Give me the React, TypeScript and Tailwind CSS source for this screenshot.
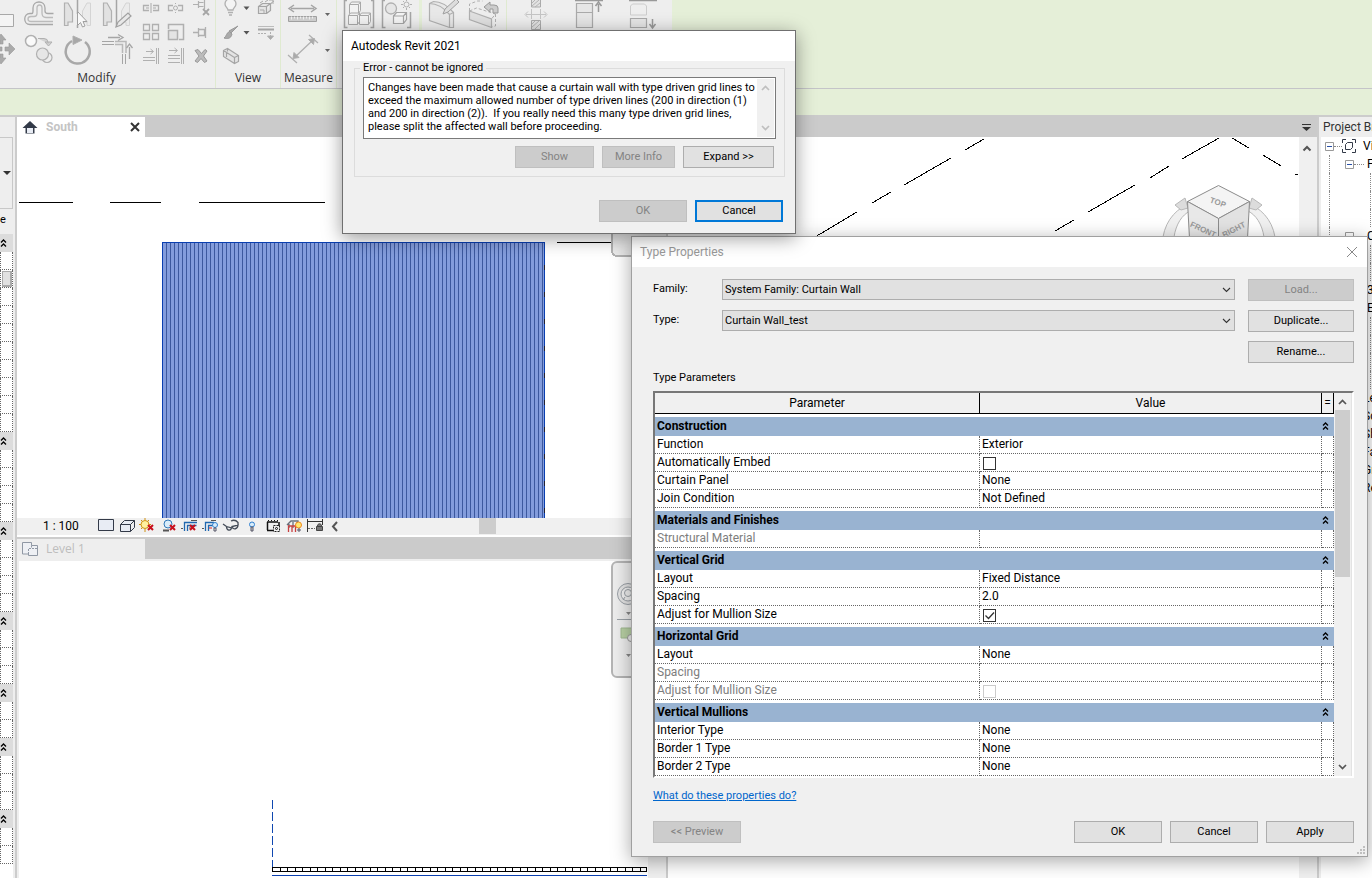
import React from 'react';

const UI = "font-['Roboto','Noto_Sans',sans-serif]";
const SEGOE = "font-['Open_Sans','Noto_Sans',sans-serif]";

interface GlyphProps {
  x: number;
  y: number;
  w: number;
  h: number;
  children: React.ReactNode;
}

// Icons of one bar share that bar's coordinate system
const Glyph: React.FC<GlyphProps> = ({ x, y, w, h, children }) => (
  <svg width={w} height={h} viewBox={`${x} ${y} ${w} ${h}`} fill="none" stroke="#b0b0b0" className="block shrink-0">
    {children}
  </svg>
);

const Tool: React.FC<GlyphProps & { label: string }> = ({ label, ...glyph }) => (
  <button type="button" aria-label={label} className="block">
    <Glyph {...glyph} />
  </button>
);

const RibbonPanel: React.FC<{ title?: string; className?: string; children: React.ReactNode }> = ({ title, className = '', children }) => (
  <div className={`flex h-[88px] shrink-0 flex-col bg-[#eeeeee] ${className}`}>
    <div className="flex">{children}</div>
    {title && <div className="flex-1 text-center text-[12px] leading-6 text-[#333]">{title}</div>}
  </div>
);

const Ribbon = () => (
  <header className={`flex h-[89px] shrink-0 border-b border-[#c4c4c8] ${SEGOE}`}>
    <RibbonPanel className="w-[216px] border-r border-[#dfead0]">
      <div className="flex flex-col">
        <div className="flex">
          <div>
            <Tool label="Cope" x={0} y={0} w={18} h={32}>
              <path d="M-4 14.500h17.500v12h-17.500" fill="#f4f4f4" stroke="#a8a8a8" />
            </Tool>
            <Tool label="Move" x={0} y={32} w={18} h={34}>
              <path d="M1 34l5 6H3v4H0v-4h-4zM1 64l5-6H3v-4H0v4h-4zM15 49l-6-6v4H5v4h4v4zM0 47h2v4H0" fill="#aaa" stroke="#999" strokeWidth=".6" />
            </Tool>
          </div>
          <div>
            <Tool label="Offset" x={18} y={0} w={40} h={32}>
              <path d="M53 24.500H30c-7 0-7-11 0-11h2c1 0 1-1 1-3V8c0-8 12-8 12 0v3c0 2 1 2.500 3 2.500h5.500" stroke="#a8a8a8" strokeWidth="1.300" />
              <path d="M53 21.500H31c-4 0-4-5 0-5h3c2 0 3-1 3-3V8c0-4 5-4 5 0v5c0 3 1 4.500 4 4.500h7" stroke="#bbb" strokeWidth="1.300" />
            </Tool>
            <Tool label="Copy" x={18} y={32} w={40} h={34}>
              <circle cx="31" cy="41" r="5.500" fill="#fafafa" strokeWidth="1.500" />
              <path d="M38 38.500h6q4 0 4 4v1M45 42h7l-3.500 4z" fill="#aaa" fillOpacity=".4" />
              <circle cx="47" cy="57.500" r="5" fill="#eee" strokeWidth="1.200" />
              <circle cx="42.500" cy="54" r="6" fill="#e6e6e6" strokeWidth="1.200" />
            </Tool>
          </div>
          <div>
            <Tool label="Mirror - Pick Axis" x={58} y={0} w={40} h={32}>
              <path d="M64.500 3v22.500h3.500V22h4.500V11L68 3z" fill="#e2e2e2" strokeWidth="1.200" />
              <path d="M90.500 3v22.500h-3.500V22h-4.500V11L87 3z" fill="#ebebeb" stroke="#d4d4d4" />
              <path d="M77.500 0v14M77.500 25v3" stroke="#a5a5a5" strokeWidth="1.500" />
              <path d="M77.500 11.500v14l3-3 2 4.500 2.500-1-2-4.500h4z" fill="#f8f8f8" stroke="#a0a0a0" />
            </Tool>
            <Tool label="Rotate" x={58} y={32} w={40} h={34}>
              <path d="M72 41a12 12 0 1 0 13 1" stroke="#a8a8a8" strokeWidth="2.500" />
              <path d="M73 36l9 4-9 4.500z" fill="#a8a8a8" />
            </Tool>
          </div>
          <div>
            <Tool label="Mirror - Draw Axis" x={98} y={0} w={40} h={32}>
              <path d="M103.500 3v22.500h3.500V22h4.500V11L107 3z" fill="#e2e2e2" strokeWidth="1.200" />
              <path d="M129.500 3v22.500h-3.500V22h-4.500V11L126 3z" fill="#ebebeb" stroke="#d4d4d4" />
              <path d="M116.500 0v27" stroke="#a5a5a5" strokeWidth="1.500" />
              <path d="M116 27l2-5 10-9 3 3-10 9z" fill="#e8e8e8" stroke="#a0a0a0" strokeWidth="1.200" />
            </Tool>
            <Tool label="Trim/Extend to Corner" x={98} y={32} w={40} h={34}>
              <path d="M102 41.500h12M102 44.500h12M122.500 54v10M125.500 54v10" stroke="#a5a5a5" />
              <path d="M115 41.500h11V53M115 44.500h7.500V53" stroke="#b8b8b8" strokeWidth="1.500" />
              <path d="M108 37.500h12M129.500 59V47" stroke="#a5a5a5" strokeWidth="1.300" />
              <path d="M118 34.500l5 3-5 3M126.500 48l3-4 3 4" stroke="#a5a5a5" strokeWidth="1.300" />
            </Tool>
          </div>
          <div>
            <Tool label="Split Element" x={138} y={0} w={25} h={20}>
              <path d="M149 5.500h-5.500v5h5.500M153 5.500h5.500v5H153" strokeWidth="1.300" />
              <path d="M151 3v10M146 8h3M153 8h3" stroke="#aaa" />
            </Tool>
            <Tool label="Array" x={138} y={20} w={25} h={24}>
              <path d="M143.500 24.500h6v6h-6zM152.500 24.500h6v6h-6zM143.500 33.500h6v6h-6zM152.500 33.500h6v6h-6z" strokeWidth="1.300" />
            </Tool>
            <Tool label="Trim/Extend Single" x={138} y={44} w={25} h={22}>
              <path d="M156.500 48v16M158.500 48v16M143 57.500h12M143 60.500h12M146 51.500h7M150.500 49l3 2.500-3 2.500" />
            </Tool>
          </div>
          <div>
            <Tool label="Split with Gap" x={163} y={0} w={25} h={20}>
              <path d="M173 5.500h-4.500v5h4.500M178 5.500h4.500v5H178" strokeWidth="1.300" />
              <path d="M175.500 3v1M175.500 12v1" />
              <circle cx="175.500" cy="8" r="2" />
            </Tool>
            <Tool label="Scale" x={163} y={20} w={25} h={24}>
              <path d="M168.500 29v-4.500h15v15H179" strokeWidth="1.500" />
              <path d="M168.500 30.500h9v9h-9z" fill="#e4e4e4" strokeWidth="1.500" />
            </Tool>
            <Tool label="Trim/Extend Multiple" x={163} y={44} w={25} h={22}>
              <path d="M181.500 48v16M183.500 48v16M168 55.500h12M168 58.500h12M168 62.500h12M169 50.500h8M174.500 48l3 2.500-3 2.500" />
            </Tool>
          </div>
          <div>
            <Tool label="Unpin" x={188} y={0} w={25} h={20}>
              <path d="M193 4.500h5M198.500 1v7M198.500 2.500h5M198.500 6.500h5M204.500 0v9" strokeWidth="1.200" />
              <path d="M203 9l6 6M209 9l-6 6" stroke="#a5a5a5" strokeWidth="1.800" />
            </Tool>
            <Tool label="Pin" x={188} y={20} w={25} h={24}>
              <path d="M193 32.500h5M198.500 28v9M198.500 29.500h6v6h-6M205.500 27v11" strokeWidth="1.300" />
            </Tool>
            <Tool label="Delete" x={188} y={44} w={25} h={22}>
              <path d="M195 50.500l3-1 3.500 4 3.500-4 2 1.500-3.500 5 3.500 5-2.500 1.500-3.500-4-3.500 4-2.500-1.500 4-5z" fill="#bbb" stroke="#999" />
            </Tool>
          </div>
        </div>
        <div className="pr-5 text-center text-[12px] leading-6 text-[#333]">Modify</div>
      </div>
    </RibbonPanel>

    <RibbonPanel title="View" className="w-[65px] border-r border-[#dfead0]">
      <div className="pl-[2px]">
        <Tool label="Hide in View" x={218} y={0} w={34} h={20}>
          <path d="M228 10c0-2-3-3-3-6a5.500 5.500 0 0 1 11 0c0 3-3 4-3 6zM228 12.500h5M229 15h3" fill="#f4f4f4" strokeWidth="1.300" />
          <path d="M243.500 6.500h6l-3 3.500z" fill="#555" stroke="none" />
        </Tool>
        <Tool label="Override Graphics" x={218} y={20} w={34} h={24}>
          <path d="M238 26l-7 7-2-2zM229.500 31.500l2.500 2.500c-1 5-5 5-8 4 3-2 2-5 5.500-6.500z" fill="#aaa" stroke="#999" />
          <path d="M243.500 31h6l-3 3.500z" fill="#555" stroke="none" />
        </Tool>
        <Tool label="Selection Box" x={218} y={44} w={34} h={22}>
          <path d="M223.500 50.500l4-2 11 7v6l-4 2-11-7zM223.500 50.500l11 7v6M234.500 57.500l4-2M226.500 52v5M227.500 48.500v3" fill="#e4e4e4" strokeWidth="1.200" stroke="#a5a5a5" />
        </Tool>
      </div>
      <div>
        <Tool label="Displace Elements" x={252} y={0} w={28} h={20}>
          <path d="M258.500 6.500h8v7h-8zM258.500 6.500l4-3h8l-4 3M266.500 13.500l4-3v-7" fill="#e4e4e4" strokeWidth="1.200" stroke="#a5a5a5" />
          <path d="M260 3l3-2M265 2l3-2M270 4l4-3M269 0h4v4M260 10h4v3" stroke="#aaa" />
        </Tool>
        <Tool label="Linework" x={252} y={20} w={28} h={24}>
          <path d="M258 26.500h16" stroke="#bbb" />
          <path d="M258 29.500h16" stroke="#a5a5a5" strokeWidth="2" />
          <path d="M258 33.500h9M270.500 32v4" strokeDasharray="2 1" />
          <path d="M267.500 36h6l-3 3.500z" fill="#aaa" />
        </Tool>
      </div>
    </RibbonPanel>

    <RibbonPanel title="Measure" className="w-[56px] border-r border-[#dfead0]">
      <div>
        <Tool label="Measure" x={281} y={0} w={54} h={32}>
          <path d="M291 8.500h23M294 5l-5 3.500 5 3.500M311 5l5 3.500-5 3.500" stroke="#a5a5a5" strokeWidth="1.500" />
          <path d="M288.500 16.500h28v5h-28z" fill="#ccc" stroke="#a0a0a0" />
          <path d="M291.500 16.500v3M294.500 16.500v2M297.500 16.500v3M300.500 16.500v2M303.500 16.500v3M306.500 16.500v2M309.500 16.500v3M312.500 16.500v2" stroke="#eee" />
          <path d="M325 13h5l-2.500 3z" fill="#666" stroke="none" />
        </Tool>
        <Tool label="Aligned Dimension" x={281} y={32} w={54} h={34}>
          <path d="M295 57l18-17M288 55l9 8M309 35l9 8" strokeWidth="1.300" />
          <path d="M308.500 39.500l6-1-1 6zM294 52.500l-1 6 6-1z" fill="#aaa" />
          <path d="M325 49h5l-2.500 3z" fill="#666" stroke="none" />
        </Tool>
      </div>
    </RibbonPanel>

    <RibbonPanel className="w-[82px]">
      <Tool label="Create Assembly" x={337} y={0} w={40} h={32}>
        <path d="M347 .5h-2.500v27h3M371 .5h2.500v27h-3" strokeWidth="1.500" stroke="#a5a5a5" />
        <g fill="#f2f2f2" stroke="#a8a8a8" strokeLinejoin="round">
          <path d="M349.500 4.500l2-2.500h9v8.500l-2 3h-9zM349.500 4.500h9v9M358.500 4.500l2-2.500" />
          <path d="M348.500 15.500l2-2.500h9v8.500l-2 3h-9zM348.500 15.500h9v9M357.500 15.500l2-2.500" />
          <path d="M359.500 15.500l2-2.500h9v8.500l-2 3h-9zM359.500 15.500h9v9M368.500 15.500l2-2.500" />
        </g>
      </Tool>
      <Tool label="Create Group" x={377} y={0} w={42} h={32}>
        <path d="M385 .5h-2.500v27h3M407 27.500h3.500V12" strokeWidth="1.500" stroke="#a5a5a5" />
        <circle cx="391" cy="8.500" r="5.500" fill="#e6e6e6" strokeWidth="1.300" />
        <path d="M393.500 16l3-3.500h10v7l-3 4h-10zM393.500 16h10v7.500M403.500 16l3-3.500" fill="#f4f4f4" strokeWidth="1.200" stroke="#a5a5a5" />
        <circle cx="406.500" cy="4.500" r="2.500" />
        <path d="M406.500 0v1M406.500 8v2M401 4.500h2M410 4.500h2M403 1l1 1M410 8l-1-1M403 8l1-1" />
      </Tool>
    </RibbonPanel>
    <RibbonPanel className="ml-[3px] w-[85px] border-r border-[#dfead0]">
      <Tool label="Edit Profile" x={422} y={0} w={42} h={32}>
        <path d="M429.500 3.500l4-2c8 0 14 4 20 11v15h-4l-20-7z" fill="#e8e8e8" strokeWidth="1.200" />
        <path d="M429.500 3.500c8 0 14 4 20 11v13M449.500 14.500l4-2" strokeWidth="1.200" />
        <path d="M443 14l2-5 11-10 3 3-11 10z" fill="#ddd" stroke="#a0a0a0" />
      </Tool>
      <Tool label="Reset Profile" x={464} y={0} w={42} h={32}>
        <path d="M469.500 11l22 8v8.500l-22-8z" fill="#e0e0e0" strokeWidth="1.200" />
        <path d="M469.500 11V4l8-3h5M495.500 14v12l-4 1M469.500 11l7-3 19 6-4 5" strokeDasharray="3 2" />
        <path d="M498 13V8q0-3-4-3h-4V2l-6 5 6 5V9h3v4z" fill="#ccc" stroke="#999" />
      </Tool>
    </RibbonPanel>
    <RibbonPanel className="w-[165px]">
      <Tool label="Attach Sides" x={507} y={0} w={52} h={32}>
        <path d="M531.500 -2h9v9h-9zM531.500 20.500h9v9h-9z" fill="#e2e2e2" stroke="#aaa" />
        <path d="M532 6l7-6M535 7l5-4M532 27l7-6M535 29l5-5M532 3l3-3M532 24l3-3" stroke="#b4b4b4" />
        <path d="M531.500 9v10M540.500 9v10M526 14.500h20M528 11.500l-3 3 3 3M544 11.500l3 3-3 3" stroke="#c4c4c4" />
      </Tool>
      <Tool label="Attach Top/Base" x={559} y={0} w={54} h={32}>
        <path d="M576.500 3.500h16v9h-16zM576.500 12.500h16v15h-16z" fill="#e6e6e6" stroke="#aaa" strokeWidth="1.200" />
        <path d="M575 .5h28M598.500 12V4M595.500 6l3-4 3 4" stroke="#999" strokeWidth="1.500" />
      </Tool>
      <Tool label="Detach Top/Base" x={613} y={0} w={52} h={32}>
        <path d="M630.500 18.500h16v9h-16z" fill="#e6e6e6" stroke="#aaa" strokeWidth="1.200" />
        <path d="M630.500 15V6l2-2h12l2 2v9z" stroke="#ccc" />
        <path d="M629 .5h28M652.500 19v8M649.500 24l3 4 3-4" stroke="#999" strokeWidth="1.500" />
      </Tool>
    </RibbonPanel>
  </header>
);

const DoubleChevron = () => (
  <svg width="7" height="8" viewBox="0 0 7 8" fill="none" stroke="#000" strokeWidth="1.3" className="block">
    <path d="M1 3.500l2.500-2.500L6 3.500M1 7.500L3.500 5 6 7.500" />
  </svg>
);

const propertyGroups = [10, 4, 4, 3, 2, 3, 2];

const PropertiesEdge = () => (
  <aside className="flex w-[15px] shrink-0 flex-col overflow-hidden border-t-2 border-[#ccc] bg-[#eeeeee]">
    <div className="mt-5 flex h-[72px] w-[13px] shrink-0 items-center justify-end border border-l-0 border-[#c8c8c8] pr-px">
      <svg width="8" height="4" viewBox="0 0 8 4"><path d="M0 0h8L4 4z" fill="#333" /></svg>
    </div>
    <div className={`h-[25px] shrink-0 text-[11px] leading-[22px] ${UI}`}>e</div>
    <div className="w-[13px] flex-1 bg-white">
      {propertyGroups.map((rows, i) => (
        <div key={i}>
          <div className="flex h-[18px] items-center bg-[#dcdcdc]"><DoubleChevron /></div>
          {Array.from({ length: rows }, (_, r) => (
            <div key={r} className="flex h-[18px] items-center border-r border-b border-l border-dotted border-[#666]">
              {i === 0 && r === 1 && <span className="ml-px block h-4 w-[10px] border border-r-2 border-b-2 border-[#aaa] bg-[#e1e1e1]" />}
            </div>
          ))}
        </div>
      ))}
    </div>
  </aside>
);

const RedX = ({ x, y }: { x: number; y: number }) => (
  <path d={`M${x} ${y}l5 5m0-5l-5 5`} stroke="#c8101c" strokeWidth="2" />
);

const ViewControlBar = () => (
  <div className="flex h-[17px] shrink-0 items-center bg-[#f0f0f0]">
    <button type="button" className={`w-20 shrink-0 pl-[26px] text-left text-[12px] leading-[17px] whitespace-nowrap ${UI}`}>1 : 100</button>
    <Tool label="Detail Level" x={97} y={519} w={20} h={17}>
      <path d="M98.500 520.500h15v11h-15z" fill="#e8ecf4" stroke="#333a48" />
    </Tool>
    <Tool label="Visual Style" x={117} y={519} w={20} h={17}>
      <path d="M120.500 525.500h10v7h-10zM120.500 525.500l4-4h10l-4 4M130.500 532.500l4-4v-7" fill="#e8ecf4" stroke="#333a48" />
    </Tool>
    <Tool label="Sun Path" x={137} y={519} w={22} h={17}>
      <circle cx="145" cy="525.500" r="4" fill="#fff0a0" stroke="#d09010" />
      <path d="M145 519v2M145 530v3M139 525.500h2M149 525.500h2M141 521l1 1M149 521l-1 1M141 530l1-1" stroke="#d09010" />
      <RedX x={148} y={526} />
    </Tool>
    <Tool label="Shadows" x={159} y={519} w={20} h={17}>
      <circle cx="168" cy="525" r="4" fill="#d8ecfa" stroke="#3078b8" />
      <path d="M163 531.500h6" stroke="#555" strokeWidth="2" />
      <RedX x={170} y={526} />
    </Tool>
    <Tool label="Crop View" x={179} y={519} w={21} h={17}>
      <path d="M184.500 532v-8.500H197M187.500 532v-5.500h9" stroke="#2068b0" strokeWidth="1.300" />
      <path d="M181 529.500h2M191 521.500h6M189 529h3" stroke="#555" />
      <RedX x={190} y={526} />
    </Tool>
    <Tool label="Show Crop Region" x={200} y={519} w={21} h={17}>
      <path d="M205.500 532v-8.500H214M208.500 532v-5.500h4" stroke="#2068b0" strokeWidth="1.300" />
      <path d="M202 529.500h2M211 521.500h5" stroke="#555" />
      <path d="M209 529h3" stroke="#d22" />
      <circle cx="215" cy="526" r="2.500" fill="#d8ecfa" stroke="#3080d0" />
      <path d="M214 529h2v3h-2z" stroke="#556" />
    </Tool>
    <Tool label="Temporary Hide/Isolate" x={221} y={519} w={24} h={17}>
      <path d="M223 525l3.500 2.500M226.500 527.500c0 4 4 5 5 1.500zM232 527.500c1 4 6 2.500 6-1.500zM231 522q4-2 7 1.500v2.500" stroke="#444c58" strokeWidth="1.300" />
    </Tool>
    <Tool label="Reveal Hidden Elements" x={245} y={519} w={17} h={17}>
      <circle cx="252" cy="525.500" r="2.500" fill="#d8ecfa" stroke="#3080d0" />
      <path d="M251 528h2v4h-2z" fill="#ccc" stroke="#556" />
    </Tool>
    <Tool label="Temporary View Properties" x={262} y={519} w={22} h={17}>
      <path d="M267 523h11M267 531.500h6M267.500 523v8M279 523v4" stroke="#111" strokeWidth="1.500" />
      <path d="M268 521.500h10" stroke="#111" strokeDasharray="1 2" />
      <path d="M273.500 526.500h6v6h-6z" stroke="#222" strokeDasharray="2 1" />
      <circle cx="276.500" cy="529.500" r="1" stroke="#111" />
    </Tool>
    <Tool label="Analytical Model" x={284} y={519} w={21} h={17}>
      <path d="M287 526l4-4h7v3M289 525v4M293 523v6M297 523v6" stroke="#68707c" strokeWidth="1.300" />
      <path d="M288.500 533v-6h7v6M292 527v6" stroke="#c84040" strokeWidth="1.300" />
      <circle cx="298.500" cy="526" r="3" fill="#ffe870" stroke="#f08820" />
      <path d="M298 530h2v2h-2z" stroke="#556" />
    </Tool>
    <Tool label="Reveal Constraints" x={305} y={519} w={22} h={17}>
      <path d="M307.500 520v13M322.500 520v6M308 522.500h14" stroke="#333" />
      <path d="M308 529.500h7" stroke="#666" strokeDasharray="2 1" />
      <path d="M316.500 527.500h6v4h-6zM317.500 527c0-3 4-3 4 0" fill="#777" stroke="#444" />
    </Tool>
    <Tool label="Scroll left" x={327} y={519} w={18} h={17}>
      <path d="M337 523l-4 4.500 4 4.500" stroke="#555" strokeWidth="2" />
    </Tool>
    <span className="ml-[134px] h-4 w-[17px] shrink-0 bg-[#cdcdcd]" />
  </div>
);

const wallLines = Array.from({ length: 95 }, (_, i) => 149 + i * 4);

const SouthView = () => (
  <section className="flex min-h-0 flex-[401] flex-col bg-white">
    <div className="min-h-0 flex-1 overflow-hidden">
      <svg width="100%" height="100%" className="block" shapeRendering="crispEdges">
        <path d="M2 65.500h54M93 65.500h51M182 65.500h126M540 105.500h56" stroke="#000" />
        <rect x="145" y="105" width="383" height="300" fill="#839cdc" />
        {wallLines.map(x => <rect key={x} x={x} y="106" width="1" height="300" fill="#3c589e" />)}
        <path d="M145.500 406V105.500h382V406" fill="none" stroke="#0a3fb0" />
        <path d="M527.500 128v300" stroke="#223" strokeDasharray="5 22" />
        <rect x="595" y="60" width="60" height="59" rx="5" fill="#ededed" stroke="#b4b4b4" strokeWidth="2" />
      </svg>
    </div>
    <ViewControlBar />
    <div className="h-[2px] shrink-0 bg-white" />
  </section>
);

const planJoints = Array.from({ length: 50 }, (_, i) => 253 + Math.round(i * 7.5));

const LevelView = () => (
  <section className="flex min-h-0 flex-[340] flex-col border-t-2 border-[#ccc]">
    <div className="flex h-5 shrink-0 bg-[#cbcbcb]">
      <button type="button" className={`flex w-[128px] items-center gap-2 bg-[#eeeeee] pl-[5px] text-[12px] text-[#bdbdbd] ${SEGOE}`}>
        <svg width="16" height="14" viewBox="0 0 16 14" fill="#eef0f4" stroke="#9098a4">
          <path d="M.5 .5h9v3h6v10h-9v-1.500h-6z" />
          <path d="M9.500 3.500v3M6.500 12V6.500h6M13 6.500h2" strokeDasharray="2 1" />
        </svg>
        Level 1
      </button>
    </div>
    <div className="flex min-h-0 flex-1 overflow-hidden border-t-2 border-l-2 border-[#eeeeee] bg-white">
      <div className="min-w-0 flex-1 overflow-hidden">
        <svg width="100%" height="100%" className="block">
          <path d="M253.500 239v68" stroke="#1048b0" strokeDasharray="9 3" />
          <g shapeRendering="crispEdges" stroke="#000" fill="#fff">
            <rect x="253.500" y="306.500" width="374" height="4" />
            {planJoints.map(x => <path key={x} d={`M${x}.5 307v4`} />)}
            <path d="M253 314.500h375" stroke="#0a3fb0" />
          </g>
          <rect x="593" y="1" width="60" height="115" rx="5" fill="#ededed" stroke="#b4b4b4" strokeWidth="2" />
          <g fill="none" stroke="#9aa0a6">
            <circle cx="609" cy="33" r="10.500" fill="#e4e4e4" />
            <circle cx="609" cy="33" r="7" fill="#f0f0f0" />
            <circle cx="609" cy="32" r="3.500" />
            <path d="M604 39l2-3M598 58.500h20" />
          </g>
          <path d="M602 67h11v10h-11z" fill="#b8d0a4" stroke="#a0b890" />
          <circle cx="612" cy="77" r="3.500" fill="#eee" stroke="#999" />
          <path d="M607 51h5l-2.500 3zM607 93h5l-2.500 3z" fill="#888" />
        </svg>
      </div>
      <div className="w-[18px] shrink-0 bg-[#f0f0f0]" />
    </div>
  </section>
);

const ThreeDView = () => (
  <section className="flex min-w-0 flex-1 border-l-2 border-[#ccc] bg-white">
    <div className="min-w-0 flex-1 overflow-hidden">
      <svg width="100%" height="100%" className="block">
        <g stroke="#000" shapeRendering="crispEdges" fill="none">
          <path d="M147 100l42-25M204 66l19-11M236 48l47-27M297 13l19-11M387 94l19-11M420 75l47-27M482 41l19-12M514 22l37-21M564 1l17 10M595 18l18 11M627 37h3" />
        </g>
        <g stroke="#b8b8b8" fill="#f0f0f0">
          <path d="M495 100c3-18 15-30 29-34l-2 8c-8 4-14 13-16 26z" />
          <path d="M607 100c-3-18-15-30-29-34l2 8c8 4 14 13 16 26z" />
          <path d="M507 68l10-7 3 10-7 2zM594 68l-10-7-3 10 7 2z" fill="#dcdcdc" />
        </g>
        <g stroke="#8c8c8c" fill="#ededed">
          <path d="M550.500 48.500l31 16-31 17-31-17z" fill="#f4f4f4" />
          <path d="M519.500 64.500l31 17v40l-29-20z" fill="#e8e8e8" />
          <path d="M581.500 64.500l-31 17v40l29-20z" fill="#e2e2e2" />
        </g>
        <g fill="#9a9a9a" fontFamily="Liberation Sans, sans-serif" fontWeight="bold" textAnchor="middle">
          <text fontSize="8" transform="translate(549 68) rotate(20)">TOP</text>
          <text fontSize="8" transform="translate(534 95) rotate(25)">FRONT</text>
          <text fontSize="8" transform="translate(567 95) rotate(-27)">RIGHT</text>
        </g>
      </svg>
    </div>
    <div className="w-[18px] shrink-0 bg-[#f0f0f0] pt-2">
      <svg width="18" height="8" viewBox="0 0 18 8" fill="none" stroke="#555" strokeWidth="2"><path d="M4.500 5.500l3.500-3.500 3.500 3.500" /></svg>
    </div>
  </section>
);

const treeRows: { text?: string; root?: boolean; open?: boolean; icon?: boolean }[] = [
  { text: 'Views (all)', root: true, open: true, icon: true },
  { text: 'Floor Plans', open: true },
  {}, {}, {},
  { text: 'Ceiling Plans', open: true },
  {}, {},
  { text: '3D Views' },
  { text: 'Elevations' },
  {}, {}, {}, {},
  { text: 'Legends', root: true },
  { text: 'Schedules', root: true },
  { text: 'Sheets', root: true },
  { text: 'Families', root: true },
  { text: 'Groups', root: true },
  { text: 'Revit Links', root: true },
];

const MinusBox = () => (
  <svg width="9" height="9" viewBox="0 0 9 9" className="shrink-0"><path d="M.5 .5h8v8h-8z" fill="#fff" stroke="#999" /><path d="M2 4.500h5" stroke="#2850a8" /></svg>
);

const ProjectBrowser = () => (
  <aside className={`flex w-[53px] shrink-0 flex-col overflow-hidden bg-[#eeeeee] ${UI}`}>
    <h2 className="h-5 shrink-0 pl-1 text-[12px] leading-[21px] whitespace-nowrap text-[#333]">Project Browser</h2>
    <ul className="ml-[2px] flex-1 bg-white pl-1 text-[12px] leading-[18px] text-black">
      {treeRows.map((row, i) => (
        <li key={i} className="flex h-[18px] items-center whitespace-nowrap">
          {row.root && row.open && <MinusBox />}
          {row.root && row.icon && (
            <>
              <span className="w-2 shrink-0 border-t border-dotted border-[#888]" />
              <svg width="14" height="14" viewBox="0 0 14 14" fill="none" stroke="#333a48" className="mr-[7px] shrink-0">
                <path d="M.5 4V.5H4M10 .5h3.500V4M13.500 10v3.500H10M4 13.500H.5V10M3.500 5.500l2-2h5v5l-2 2h-5z" />
              </svg>
            </>
          )}
          {row.root && !row.icon && <span className="ml-1 w-[34px] shrink-0" />}
          {!row.root && (
            <>
              <span className="ml-1 h-[18px] w-4 shrink-0 border-l border-dotted border-[#888]" />
              {row.open ? <MinusBox /> : <span className="ml-1 h-[18px] w-[5px] shrink-0" />}
              <span className={`shrink-0 ${row.text ? 'mr-[3px] w-[10px] border-t border-dotted border-[#888]' : 'ml-4 h-[18px] w-1 border-l border-dotted border-[#888]'}`} />
            </>
          )}
          {row.text}
        </li>
      ))}
    </ul>
  </aside>
);

const buttonLook = 'border border-[#adadad] bg-[#e1e1e1] text-black disabled:border-[#bfbfbf] disabled:bg-[#cccccc] disabled:text-[#838383]';

const PushButton: React.FC<React.ButtonHTMLAttributes<HTMLButtonElement>> = ({ className = '', ...rest }) => (
  <button type="button" className={`h-[22px] text-center text-[11px] whitespace-nowrap ${buttonLook} ${className}`} {...rest} />
);

const Arrow = ({ up = false, color, thin = false }: { up?: boolean; color: string; thin?: boolean }) => (
  <svg width="9" height="6" viewBox="0 0 9 6" fill="none" stroke={color} strokeWidth={thin ? 1.1 : 1.7} className="block">
    <path d={up ? 'M1 5l3.500-3.500L8 5' : 'M1 1l3.500 3.500L8 1'} />
  </svg>
);

const errorText = `Changes have been made that cause a curtain wall with type driven grid lines to
exceed the maximum allowed number of type driven lines (200 in direction (1)
and 200 in direction (2)).  If you really need this many type driven grid lines,
please split the affected wall before proceeding.`;

const ErrorDialog = () => (
  <div role="alertdialog" aria-labelledby="error-title" className={`absolute top-[30px] left-[342px] z-20 w-[454px] border border-[#707070] bg-[#f0f0f0] pb-[11px] text-[11px] text-black shadow-[0_4px_18px_rgba(0,0,0,0.4)] ${UI}`}>
    <h1 id="error-title" className="h-[30px] bg-white pl-2 text-[12px] leading-[30px]">Autodesk Revit 2021</h1>
    <fieldset className="mr-[10px] ml-[11px] border border-[#dcdcdc] px-2 pb-2">
      <legend className="-ml-[3px] h-[14px] px-[3px] leading-[14px]">Error - cannot be ignored</legend>
      <div className="mt-[2px] flex h-[62px] border border-[#7a7a7a] bg-white p-px">
        <textarea readOnly aria-label="Error message" value={errorText} className="min-w-0 flex-1 resize-none overflow-hidden bg-white pt-[2px] pl-[3px] leading-[13px] whitespace-pre outline-none" />
        <div className="flex w-[17px] shrink-0 flex-col items-center justify-between bg-[#f0f0f0] py-[6px]">
          <Arrow up color="#bfbfbf" />
          <Arrow color="#bfbfbf" />
        </div>
      </div>
      <div className="mt-[7px] flex justify-end gap-2 pr-[2px]">
        <PushButton disabled className="w-[79px]">Show</PushButton>
        <PushButton disabled className="w-[73px]">More Info</PushButton>
        <PushButton className="w-[91px]">Expand &gt;&gt;</PushButton>
      </div>
    </fieldset>
    <div className="mt-[23px] flex justify-end gap-2 pr-3">
      <PushButton disabled className="w-[88px]">OK</PushButton>
      <button type="button" className="h-[22px] w-[88px] border-2 border-[#0078d7] bg-[#e1e1e1] text-[11px]">Cancel</button>
    </div>
  </div>
);

interface Param {
  name: string;
  value?: string;
  check?: boolean;
  disabled?: boolean;
}

const groups: { title: string; params: Param[] }[] = [
  {
    title: 'Construction',
    params: [
      { name: 'Function', value: 'Exterior' },
      { name: 'Automatically Embed', check: false },
      { name: 'Curtain Panel', value: 'None' },
      { name: 'Join Condition', value: 'Not Defined' },
    ],
  },
  { title: 'Materials and Finishes', params: [{ name: 'Structural Material', disabled: true }] },
  {
    title: 'Vertical Grid',
    params: [
      { name: 'Layout', value: 'Fixed Distance' },
      { name: 'Spacing', value: '2.0' },
      { name: 'Adjust for Mullion Size', check: true },
    ],
  },
  {
    title: 'Horizontal Grid',
    params: [
      { name: 'Layout', value: 'None' },
      { name: 'Spacing', disabled: true },
      { name: 'Adjust for Mullion Size', check: false, disabled: true },
    ],
  },
  {
    title: 'Vertical Mullions',
    params: [
      { name: 'Interior Type', value: 'None' },
      { name: 'Border 1 Type', value: 'None' },
      { name: 'Border 2 Type', value: 'None' },
    ],
  },
];

const CheckCell = ({ param }: { param: Param }) => (
  <span className="relative mt-[3px] ml-px block h-[13px] w-[13px]">
    <input
      type="checkbox"
      aria-label={param.name}
      defaultChecked={param.check}
      disabled={param.disabled}
      className="peer block h-[13px] w-[13px] appearance-none border border-[#333] bg-white disabled:border-[#ccc]"
    />
    <svg viewBox="0 0 13 13" className="pointer-events-none absolute inset-0 hidden peer-checked:block" fill="none" stroke="#333" strokeWidth="1.300">
      <path d="M2.500 6.500l3 3 5.500-6" />
    </svg>
  </span>
);

const cellLook = 'h-[18px] border-r border-b border-dotted border-[#666] p-0 pl-[2px] align-top leading-4';

const ParameterTable = () => (
  <div className="flex border-t-2 border-r-2 border-b-2 border-l-2 border-t-[#777] border-r-white border-b-white border-l-[#777] bg-[#f0f0f0]">
    <table className="min-w-0 flex-1 table-fixed border-separate border-spacing-0 bg-white text-[12px]">
      <colgroup>
        <col className="w-[325px]" />
        <col />
        <col className="w-[12px]" />
      </colgroup>
      <thead>
        <tr className="h-[21px] bg-[#f0f0f0]">
          <th className="border-r border-b border-black p-0 leading-5 font-normal">Parameter</th>
          <th className="border-r border-b border-black p-0 leading-5 font-normal">Value</th>
          <th className="border-r border-b border-black p-0 leading-5 font-normal">=</th>
        </tr>
      </thead>
      {groups.map(group => (
        <tbody key={group.title}>
          <tr>
            <th colSpan={3} className="h-[22px] border-t-[3px] border-white bg-[#99b3d1] p-0 pl-[2px] text-left font-bold">
              <div className="flex h-[19px] items-center justify-between pr-[5px] pb-px leading-[18px]">
                {group.title}
                <button type="button" aria-label={`Collapse ${group.title}`}><DoubleChevron /></button>
              </div>
            </th>
          </tr>
          {group.params.map(param => (
            <tr key={param.name} className={param.disabled ? 'text-[#7d7d7d]' : 'text-black'}>
              <td className={cellLook}>{param.name}</td>
              <td className={cellLook}>{param.check === undefined ? param.value : <CheckCell param={param} />}</td>
              <td className={cellLook}></td>
            </tr>
          ))}
        </tbody>
      ))}
    </table>
    <div className="flex w-[18px] shrink-0 flex-col items-center border-r border-[#e3e3e3] pb-[6px]">
      <div className="flex h-[17px] shrink-0 items-center"><Arrow up color="#555" /></div>
      <div className="h-[167px] w-[15px] shrink-0 bg-[#cdcdcd]" />
      <div className="flex-1" />
      <Arrow color="#555" />
    </div>
  </div>
);

const ComboBox = ({ id, value }: { id: string; value: string }) => (
  <div className="relative">
    <select id={id} defaultValue={value} className="block h-[21px] w-full appearance-none border border-[#adadad] bg-[#e1e1e1] pl-[2px] text-[11px] leading-[18px] text-black">
      <option>{value}</option>
    </select>
    <span className="pointer-events-none absolute top-2 right-1"><Arrow thin color="#333" /></span>
  </div>
);

const TypePropertiesDialog = () => (
  <div role="dialog" aria-labelledby="type-title" className={`absolute top-[236px] left-[631px] z-10 w-[737px] border border-[#a0a0a0] bg-[#f0f0f0] text-[11px] text-black shadow-[0_4px_18px_rgba(0,0,0,0.35)] ${UI}`}>
    <div className="flex h-[30px] items-center justify-between bg-white pr-[9px] pl-2">
      <h1 id="type-title" className="text-[12px] text-[#999]">Type Properties</h1>
      <button type="button" aria-label="Close">
        <svg width="12" height="12" viewBox="0 0 12 12" stroke="#888" className="block"><path d="M1 1l10 10M11 1L1 11" /></svg>
      </button>
    </div>
    <div className="pt-3 pr-[13px] pl-[21px]">
      <div className="grid grid-cols-[69px_1fr_119px] gap-y-[9px]">
        <label htmlFor="family" className="leading-5">Family:</label>
        <ComboBox id="family" value="System Family: Curtain Wall" />
        <PushButton disabled className="w-[106px] justify-self-end">Load...</PushButton>
        <label htmlFor="type" className="leading-5">Type:</label>
        <ComboBox id="type" value="Curtain Wall_test" />
        <PushButton className="w-[106px] justify-self-end">Duplicate...</PushButton>
        <PushButton className="col-start-3 w-[106px] justify-self-end">Rename...</PushButton>
      </div>
      <h2 className="mt-[7px] mb-[6px] leading-[15px]">Type Parameters</h2>
      <ParameterTable />
      <a href="#help" className="mt-[9px] inline-block leading-[18px] text-[#0066cc] underline">What do these properties do?</a>
      <div className="mt-4 flex gap-2">
        <PushButton disabled className="mr-auto w-[88px]">&lt;&lt; Preview</PushButton>
        <PushButton className="w-[88px]">OK</PushButton>
        <PushButton className="w-[88px]">Cancel</PushButton>
        <PushButton className="w-[88px]">Apply</PushButton>
      </div>
    </div>
    <div className="flex h-[13px] items-end justify-end p-[2px]">
      <svg width="8" height="8" viewBox="0 0 8 8" fill="#bfbfbf"><path d="M6 0h2v2H6zM3 3h2v2H3zM6 3h2v2H6zM0 6h2v2H0zM3 6h2v2H3zM6 6h2v2H6z" /></svg>
    </div>
  </div>
);

export default function App() {
  return (
    <div className="relative flex h-screen flex-col overflow-hidden bg-[#e5efd8]">
      <Ribbon />
      <div className="h-[26px] shrink-0" />
      <main className="flex min-h-0 flex-1 bg-[#ccc]">
        <PropertiesEdge />
        <div className="ml-[2px] flex min-w-0 flex-1 flex-col">
          <div className="flex h-[22px] shrink-0 items-center justify-between bg-[#cbcbcb] pt-[2px] pr-[6px]">
            <div className={`flex h-5 w-[128px] items-center bg-white pr-[5px] pl-[5px] text-[12px] font-bold text-[#c4c4c4] ${UI}`}>
              <svg width="16" height="13" viewBox="0 0 16 13" className="mr-2"><path d="M8 0l7.500 7h-3v5.500h-9V7h-3z" fill="#333a48" /><path d="M5 7h6v5H5z" fill="#e8ecf4" /></svg>
              South
              <button type="button" aria-label="Close South" className="ml-auto">
                <svg width="10" height="10" viewBox="0 0 10 10" stroke="#333" strokeWidth="2" className="block"><path d="M1 1l8 8M9 1L1 9" /></svg>
              </button>
            </div>
            <button type="button" aria-label="View list">
              <svg width="9" height="7" viewBox="0 0 9 7" fill="#333" className="block"><path d="M0 0h9v1H0zM0 3h9L4.500 7z" /></svg>
            </button>
          </div>
          <div className="flex min-h-0 flex-1">
            <div className="flex min-w-0 flex-1 flex-col">
              <SouthView />
              <LevelView />
            </div>
            <ThreeDView />
          </div>
        </div>
        <div className="mt-[2px] ml-[2px] flex"><ProjectBrowser /></div>
      </main>
      <ErrorDialog />
      <TypePropertiesDialog />
    </div>
  );
}
